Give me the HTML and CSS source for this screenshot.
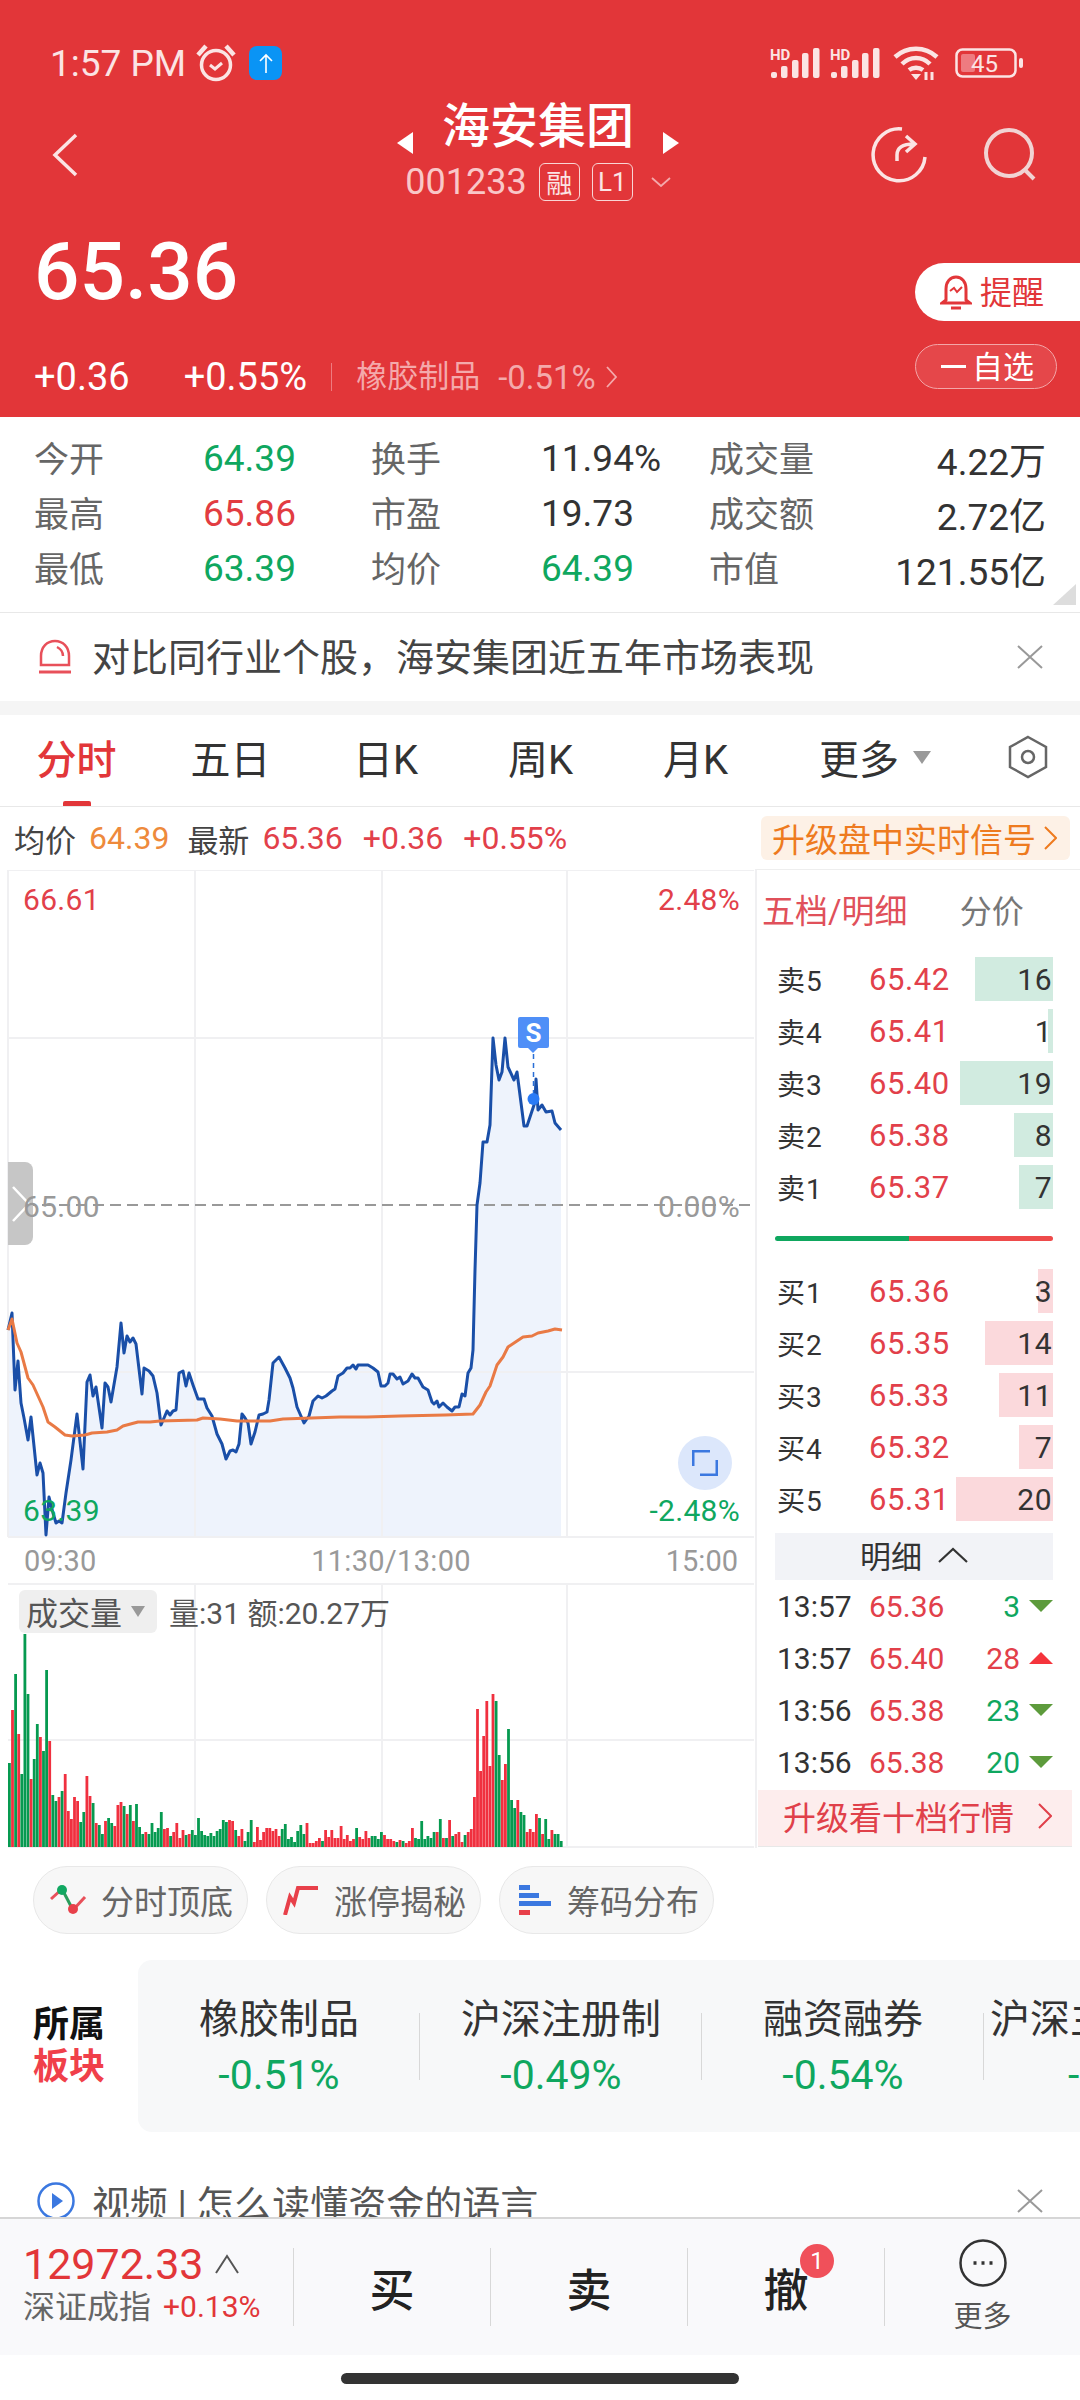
FILE: index.html
```html
<!DOCTYPE html>
<html>
<head>
  <meta charset="utf-8">
  <title>海安集团</title>
  <link rel="stylesheet" href="styles.css">
</head>
<body>
  <svg class="defs" width="0" height="0">
    <symbol id="signal" viewBox="0 0 50 30">
      <text x="0" y="12" class="hd-text">HD</text>
      <rect x="1" y="24" width="6" height="6" rx="2"/>
      <rect x="11" y="18" width="6.5" height="12" rx="2"/>
      <rect x="22" y="12" width="6.5" height="18" rx="2"/>
      <rect x="32" y="5" width="6.5" height="25" rx="2"/>
      <rect x="43" y="0" width="6.5" height="30" rx="2"/>
    </symbol>
    <symbol id="close" viewBox="0 0 26 24">
      <path d="M1 1 25 23M25 1 1 23" fill="none" stroke="#999" stroke-width="2"/>
    </symbol>
    <symbol id="tri-down" viewBox="0 0 24 12">
      <path d="M0 0H24L12 12Z" fill="#5d9b3c"/>
    </symbol>
    <symbol id="tri-up" viewBox="0 0 24 12">
      <path d="M0 12H24L12 0Z" fill="#f5343c"/>
    </symbol>
  </svg>

  <header class="header">
    <div class="status">
      <span class="status-time">1:57 PM</span>
      <svg class="alarm" width="40" height="38" viewBox="0 0 40 38" fill="none" stroke="#fbe4e4" stroke-width="3.5">
        <circle cx="20" cy="21" r="14.5"/>
        <path d="M14 21l5 4 7-6" stroke-width="3"/>
        <path d="M2 11 10 2M38 11 30 2" stroke-width="4.5"/>
      </svg>
      <span class="upload">
        <svg width="16" height="20" viewBox="0 0 16 20" fill="none" stroke="#fff" stroke-width="1.6"><path d="M8 20V2M2 8l6-6 6 6"/></svg>
      </span>
      <span class="status-right">
        <svg class="signal" width="50" height="30"><use href="#signal"/></svg>
        <svg class="signal signal-2" width="50" height="30"><use href="#signal"/></svg>
        <svg class="wifi" width="46" height="34" viewBox="0 0 46 34" fill="none" stroke="#fbe4e4" stroke-width="4.5">
          <path d="M2 11C14 0 32 0 44 11M9 18C17 10 29 10 37 18M16 24C20 21 26 21 30 24"/>
          <path d="M18 28h10l-5 6Z" fill="#fbe4e4" stroke="none"/>
          <path d="M33 26v8M39 26v8" stroke-width="3"/>
        </svg>
        <svg class="battery" width="68" height="30" viewBox="0 0 68 30">
          <rect x="1.5" y="1.5" width="59" height="27" rx="6" fill="none" stroke="#fbe4e4" stroke-width="2.5"/>
          <rect x="6" y="6" width="14" height="18" rx="2" fill="#ee7b80"/>
          <rect x="64" y="10" width="4" height="10" rx="2" fill="#fbe4e4"/>
          <text x="16" y="23.5" class="battery-text">45</text>
        </svg>
      </span>
    </div>

    <div class="nav">
      <svg class="nav-back" width="26" height="44" viewBox="0 0 26 44" fill="none" stroke="#fbe4e4" stroke-width="3.5"><path d="M24 2 3 22 24 42"/></svg>
      <div class="nav-center">
        <div class="nav-title">
          <span class="arrow-left"></span>
          <span>海安集团</span>
          <span class="arrow-right"></span>
        </div>
        <div class="nav-code">
          <span>001233</span>
          <span class="code-badge">融</span>
          <span class="code-badge">L1</span>
          <svg width="20" height="10" viewBox="0 0 20 10" fill="none" stroke="#f4a9ab" stroke-width="1.8"><path d="M1 1l9 8 9-8"/></svg>
        </div>
      </div>
      <div class="nav-icons">
        <svg width="56" height="56" viewBox="0 0 56 56" fill="none" stroke="#fbe4e4" stroke-width="3.5">
          <path d="M31 2A26 26 0 1 0 54 30"/>
          <path d="M26 34V28C26 21 31 17 43 17M35 9l9 8-9 8"/>
        </svg>
        <svg width="56" height="56" viewBox="0 0 56 56" fill="none" stroke="#f1d3d3" stroke-width="4">
          <circle cx="26" cy="26" r="23"/>
          <path d="M42 43l9 9"/>
        </svg>
      </div>
    </div>

    <div class="quote">
      <div class="quote-left">
        <div class="quote-price">65.36</div>
        <div class="quote-sub">
          <span class="quote-change">+0.36</span>
          <span class="quote-percent">+0.55%</span>
          <span class="quote-sep"></span>
          <span class="quote-block">橡胶制品</span>
          <span class="quote-block-pct">-0.51%</span>
          <svg width="11" height="22" viewBox="0 0 11 22" fill="none" stroke="#f4a9ab" stroke-width="1.8"><path d="M1 1l9 10-9 10"/></svg>
        </div>
      </div>
      <div class="quote-right">
        <div class="remind">
          <svg width="32" height="36" viewBox="0 0 32 36" fill="none" stroke="#e23639" stroke-width="3">
            <path d="M6 26V15C6 8 10 3 16 3S26 8 26 15V26L30 29H2Z"/>
            <path d="M11 34H21"/>
            <path d="M10 17l4-3 3 4 5-5" stroke-width="2"/>
          </svg>
          <span class="remind-text">提醒</span>
        </div>
        <div class="watch"><span class="watch-minus"></span><span class="watch-text">自选</span></div>
      </div>
    </div>
  </header>

  <main class="content">
    <section class="stats">
      <span class="label">今开</span><span class="green">64.39</span>
      <span class="label">换手</span><span class="dark">11.94%</span>
      <span class="label">成交量</span><span class="dark stat-end">4.22万</span>
      <span class="label">最高</span><span class="red">65.86</span>
      <span class="label">市盈</span><span class="dark">19.73</span>
      <span class="label">成交额</span><span class="dark stat-end">2.72亿</span>
      <span class="label">最低</span><span class="green">63.39</span>
      <span class="label">均价</span><span class="green">64.39</span>
      <span class="label">市值</span><span class="dark stat-end">121.55亿</span>
      <span class="stats-corner"></span>
    </section>

    <section class="banner">
      <svg width="36" height="36" viewBox="0 0 36 36" fill="none" stroke="#e8505a" stroke-width="2.5">
        <path d="M4 26V17C4 8 10 2 18 2S32 8 32 17V26Z"/>
        <path d="M20 8C24 10 26 13 26 17"/>
        <path d="M2 33H34" stroke-width="3"/>
      </svg>
      <span class="banner-text">对比同行业个股，海安集团近五年市场表现</span>
      <svg class="close" width="26" height="24"><use href="#close"/></svg>
    </section>
    <div class="strip"></div>

    <nav class="tabs">
      <span class="tab tab-active">分时</span>
      <span class="tab">五日</span>
      <span class="tab">日K</span>
      <span class="tab">周K</span>
      <span class="tab">月K</span>
      <span class="tab tab-more">更多<span class="tri"></span></span>
      <svg class="tab-gear" width="42" height="44" viewBox="0 0 42 44" fill="none" stroke="#666" stroke-width="2.5">
        <path d="M21 2 39 12V32L21 42 3 32V12Z"/>
        <circle cx="21" cy="22" r="6"/>
      </svg>
    </nav>

    <div class="info">
      <span class="info-label">均价</span>
      <span class="orange">64.39</span>
      <span class="info-label info-gap">最新</span>
      <span class="red">65.36</span>
      <span class="red info-gap">+0.36</span>
      <span class="red info-gap">+0.55%</span>
      <span class="info-promo">升级盘中实时信号
        <svg width="13" height="24" viewBox="0 0 13 24" fill="none" stroke="#ee7b1f" stroke-width="2"><path d="M1 1l11 11L1 23"/></svg>
      </span>
    </div>

    <div class="main">
      <div class="charts">
        <div class="plot">
          <svg class="plot-svg" width="755" height="668" viewBox="0 870 755 668">
            <polygon id="price-area" fill="#eef3fc"/>
            <path class="grid" d="M8 870H754M8 1038H754M8 1372H754M8 1537H754M8 870V1537M195 870V1537M382 870V1537M567 870V1537"/>
            <path d="M8 1205H754" fill="none" stroke="#999" stroke-width="2" stroke-dasharray="11 6"/>
            <polyline id="price-line" fill="none" stroke="#1a4fa8" stroke-width="3" stroke-linejoin="round"/>
            <polyline id="avg-line" fill="none" stroke="#e97a45" stroke-width="3" stroke-linejoin="round"/>
            <path d="M533.5 1054V1096" stroke="#2a6fd6" stroke-width="1.5" stroke-dasharray="5 4"/>
            <circle cx="533.5" cy="1099" r="6" fill="#2a7bf6"/>
          </svg>
          <span class="side-tab">
            <svg width="20" height="38" viewBox="0 0 20 38" fill="none" stroke="#fff" stroke-width="2.5"><path d="M2 2 18 19 2 36"/></svg>
          </span>
          <span class="chart-num num-tl red">66.61</span>
          <span class="chart-num num-tr red">2.48%</span>
          <span class="chart-num num-ml gray">65.00</span>
          <span class="chart-num num-mr gray">0.00%</span>
          <span class="chart-num num-bl green">63.39</span>
          <span class="chart-num num-br green">-2.48%</span>
          <span class="signal-s">S</span>
          <span class="expand">
            <svg width="26" height="26" viewBox="0 0 26 26" fill="none" stroke="#3b78e0" stroke-width="3"><path d="M1 16V1H18M25 10V25H8"/></svg>
          </span>
        </div>

        <div class="axis">
          <span>09:30</span>
          <span class="axis-mid">11:30/13:00</span>
          <span>15:00</span>
        </div>

        <div class="vol">
          <svg class="plot-svg" width="755" height="265" viewBox="0 1583 755 265">
            <path class="grid" d="M8 1584H754M8 1740H754M8 1847H754M195 1584V1847M382 1584V1847M567 1584V1847"/>
            <g id="vol-bars"></g>
          </svg>
          <div class="vol-head">
            <span class="vol-chip">成交量<span class="tri"></span></span>
            <span class="vol-text">量:31 额:20.27万</span>
          </div>
        </div>
      </div>

      <aside class="depth">
        <div class="depth-head">
          <span class="depth-tab">五档/明细</span>
          <span class="depth-tab-off">分价</span>
        </div>
        <div class="depth-rows">
          <div class="depth-row"><span class="bar bar-sell" style="width:78px"></span><span class="depth-label">卖5</span><span class="depth-price">65.42</span><span class="depth-qty">16</span></div>
          <div class="depth-row"><span class="bar bar-sell" style="width:5px"></span><span class="depth-label">卖4</span><span class="depth-price">65.41</span><span class="depth-qty">1</span></div>
          <div class="depth-row"><span class="bar bar-sell" style="width:93px"></span><span class="depth-label">卖3</span><span class="depth-price">65.40</span><span class="depth-qty">19</span></div>
          <div class="depth-row"><span class="bar bar-sell" style="width:39px"></span><span class="depth-label">卖2</span><span class="depth-price">65.38</span><span class="depth-qty">8</span></div>
          <div class="depth-row"><span class="bar bar-sell" style="width:34px"></span><span class="depth-label">卖1</span><span class="depth-price">65.37</span><span class="depth-qty">7</span></div>
        </div>
        <div class="depth-split"><span class="split-green"></span><span class="split-red"></span></div>
        <div class="depth-rows">
          <div class="depth-row"><span class="bar bar-buy" style="width:15px"></span><span class="depth-label">买1</span><span class="depth-price">65.36</span><span class="depth-qty">3</span></div>
          <div class="depth-row"><span class="bar bar-buy" style="width:68px"></span><span class="depth-label">买2</span><span class="depth-price">65.35</span><span class="depth-qty">14</span></div>
          <div class="depth-row"><span class="bar bar-buy" style="width:54px"></span><span class="depth-label">买3</span><span class="depth-price">65.33</span><span class="depth-qty">11</span></div>
          <div class="depth-row"><span class="bar bar-buy" style="width:34px"></span><span class="depth-label">买4</span><span class="depth-price">65.32</span><span class="depth-qty">7</span></div>
          <div class="depth-row"><span class="bar bar-buy" style="width:97px"></span><span class="depth-label">买5</span><span class="depth-price">65.31</span><span class="depth-qty">20</span></div>
        </div>
        <div class="detail-head">明细
          <svg width="30" height="16" viewBox="0 0 30 16" fill="none" stroke="#333" stroke-width="2.2"><path d="M1 15 15 2 29 15"/></svg>
        </div>
        <div class="trade"><span class="trade-time">13:57</span><span class="trade-price">65.36</span><span class="trade-qty green">3</span><svg width="24" height="12"><use href="#tri-down"/></svg></div>
        <div class="trade"><span class="trade-time">13:57</span><span class="trade-price">65.40</span><span class="trade-qty red">28</span><svg width="24" height="12"><use href="#tri-up"/></svg></div>
        <div class="trade"><span class="trade-time">13:56</span><span class="trade-price">65.38</span><span class="trade-qty green">23</span><svg width="24" height="12"><use href="#tri-down"/></svg></div>
        <div class="trade"><span class="trade-time">13:56</span><span class="trade-price">65.38</span><span class="trade-qty green">20</span><svg width="24" height="12"><use href="#tri-down"/></svg></div>
        <div class="depth-promo">升级看十档行情
          <svg width="14" height="26" viewBox="0 0 14 26" fill="none" stroke="#e0404a" stroke-width="2"><path d="M1 1l12 12L1 25"/></svg>
        </div>
      </aside>
    </div>

    <div class="chips">
      <span class="chip">
        <svg width="38" height="30" viewBox="0 0 38 30" fill="none" stroke-width="3">
          <path d="M2 14 13 4" stroke="#e8505a"/><path d="M13 4 24 25" stroke="#2a9d5c"/><path d="M24 25 36 12" stroke="#e8505a"/>
          <circle cx="13" cy="5" r="5" fill="#11a862"/><circle cx="24" cy="24" r="5" fill="#e8404a"/>
        </svg>
        分时顶底
      </span>
      <span class="chip">
        <svg width="38" height="30" viewBox="0 0 38 30" fill="none" stroke="#e8404a" stroke-width="4"><path d="M3 30 8 12 12 18 16 3H36"/></svg>
        涨停揭秘
      </span>
      <span class="chip">
        <svg width="38" height="30" viewBox="0 0 38 30">
          <rect x="4" y="0" width="11" height="5" fill="#3b78e0"/>
          <rect x="4" y="8" width="20" height="5" fill="#3b78e0"/>
          <rect x="4" y="16" width="32" height="5" fill="#3b78e0"/>
          <rect x="4" y="25" width="11" height="5" fill="#e8404a"/>
        </svg>
        筹码分布
      </span>
    </div>

    <section class="sector">
      <div class="sector-title"><span>所属</span><span class="sector-title-red">板块</span></div>
      <div class="sector-card">
        <div class="sector-item"><span class="sector-name">橡胶制品</span><span class="sector-pct">-0.51%</span></div>
        <div class="sector-item"><span class="sector-name">沪深注册制</span><span class="sector-pct">-0.49%</span></div>
        <div class="sector-item"><span class="sector-name">融资融券</span><span class="sector-pct">-0.54%</span></div>
        <div class="sector-item sector-item-cut"><span class="sector-name">沪深主板</span><span class="sector-pct">-0.50%</span></div>
      </div>
    </section>

    <section class="video">
      <svg width="38" height="38" viewBox="0 0 38 38" fill="none" stroke="#3b78e0" stroke-width="2.5">
        <circle cx="19" cy="19" r="17.5"/>
        <path d="M15 11 26 19 15 27Z" fill="#3b78e0" stroke="none"/>
      </svg>
      <span class="video-text">视频 | 怎么读懂资金的语言</span>
      <svg class="close" width="26" height="24"><use href="#close"/></svg>
    </section>
  </main>

  <footer class="bottom">
    <div class="bottom-index">
      <div class="index-top"><span class="index-value">12972.33</span>
        <svg width="24" height="20" viewBox="0 0 24 20" fill="none" stroke="#555" stroke-width="2"><path d="M1 19 12 2 23 19"/></svg>
      </div>
      <div class="index-sub"><span>深证成指</span><span class="index-pct">+0.13%</span></div>
    </div>
    <div class="bottom-btn">买</div>
    <div class="bottom-btn">卖</div>
    <div class="bottom-btn">撤<span class="badge">1</span></div>
    <div class="bottom-more">
      <svg width="48" height="48" viewBox="0 0 48 48" fill="none" stroke="#333" stroke-width="2.5">
        <circle cx="24" cy="24" r="22.5"/>
        <path d="M14.5 24h3M22.5 24h3M30.5 24h3" stroke-width="3.5"/>
      </svg>
      <span>更多</span>
    </div>
  </footer>
  <div class="home"><span class="home-bar"></span></div>

  <script src="chart.js"></script>
</body>
</html>
```

FILE: styles.css
```css
* {
  box-sizing: border-box;
}

html, body {
  margin: 0;
  height: 2400px;
}

body {
  display: flex;
  flex-direction: column;
  width: 1080px;
  overflow: hidden;
  background-color: #fff;
  font-family: Roboto, "Noto Sans CJK SC", sans-serif;
  color: #333;
}

.defs {
  position: absolute;
}

.hd-text {
  font-size: 15px;
  font-weight: 700;
  font-family: Roboto, sans-serif;
}

.green { color: #0fa75f; }
.red { color: #e2404a; }
.gray { color: #999; }
.dark { color: #333; }
.orange { color: #ee8a3c; }

/* header */
.header {
  flex: none;
  height: 417px;
  background-color: #e23639;
  color: #fff;
}

.status {
  display: flex;
  align-items: center;
  height: 42px;
  margin-top: 42px;
  padding: 0 57px 0 50px;
}

.status-time {
  font-size: 37px;
  color: #fbe4e4;
}

.alarm {
  margin-left: 10px;
}

.upload {
  display: flex;
  align-items: center;
  justify-content: center;
  width: 33px;
  height: 34px;
  margin-left: 13px;
  border-radius: 8px;
  background-color: #0a94f5;
}

.status-right {
  display: flex;
  align-items: center;
  margin-left: auto;
  color: #fbe4e4;
  fill: #fbe4e4;
}

.signal-2 {
  margin-left: 10px;
}

.wifi {
  margin-left: 13px;
}

.battery {
  margin-left: 16px;
}

.battery-text {
  font-size: 24px;
  font-family: Roboto, sans-serif;
  fill: #fbe4e4;
}

.nav {
  display: flex;
  align-items: center;
  position: relative;
  height: 118px;
  margin-top: 12px;
}

.nav-back {
  margin-left: 52px;
}

.nav-center {
  display: flex;
  flex-direction: column;
  align-items: center;
  width: 400px;
  margin: -8px 0 0 260px;
}

.nav-title {
  display: flex;
  align-items: center;
  gap: 29px;
  height: 56px;
  font-size: 48px;
  font-weight: 500;
  line-height: 56px;
}

.arrow-left {
  margin-top: 32px;
  border-top: 11px solid transparent;
  border-bottom: 11px solid transparent;
  border-right: 16px solid #fff;
}

.arrow-right {
  margin-top: 32px;
  border-top: 11px solid transparent;
  border-bottom: 11px solid transparent;
  border-left: 16px solid #fff;
}

.nav-code {
  display: flex;
  align-items: center;
  gap: 12px;
  height: 44px;
  margin-top: 5px;
  font-size: 36px;
  color: #f9c7c8;
}

.code-badge {
  display: flex;
  align-items: center;
  justify-content: center;
  width: 41px;
  height: 38px;
  border: 1px solid #f9d5d5;
  border-radius: 6px;
  font-size: 26px;
  color: #fbe4e4;
}

.code-badge + svg {
  margin-left: 6px;
}

.nav-icons {
  display: flex;
  align-items: center;
  gap: 56px;
  margin-left: auto;
  margin-right: 41px;
}

.quote {
  display: flex;
  justify-content: space-between;
}

.quote-left {
  padding: 18px 0 0 34px;
}

.quote-price {
  font-size: 80px;
  font-weight: 500;
  line-height: 80px;
}

.quote-sub {
  display: flex;
  align-items: center;
  height: 40px;
  margin-top: 45px;
  font-size: 38px;
}

.quote-percent {
  margin-left: 54px;
}

.quote-sep {
  width: 1px;
  height: 28px;
  margin: 0 24px;
  background-color: #ee7b80;
}

.quote-block {
  margin-bottom: 8px;
  font-size: 31px;
  color: #f4a9ab;
}

.quote-block-pct {
  margin: 0 10px 0 18px;
  font-size: 33px;
  color: #f4a9ab;
}

.quote-right {
  display: flex;
  flex-direction: column;
  align-items: flex-end;
  padding-top: 49px;
}

.remind {
  display: flex;
  align-items: center;
  gap: 8px;
  width: 165px;
  height: 58px;
  padding-left: 25px;
  border-radius: 29px 0 0 29px;
  background-color: #fff;
  font-size: 32px;
  color: #e23639;
}

.remind-text {
  margin-bottom: 5px;
}

.watch {
  display: flex;
  align-items: center;
  width: 142px;
  height: 45px;
  margin: 23px 23px 0 0;
  padding-left: 25px;
  border: 1px solid #f3a6a8;
  border-radius: 23px;
  background-color: #e5474a;
  font-size: 31px;
}

.watch-minus {
  width: 25px;
  height: 3px;
  margin-right: 6px;
  background-color: #fff;
}

.watch-text {
  margin-bottom: 5px;
}

/* page content below the header */
.content {
  flex: 1;
  min-height: 0;
  overflow: hidden;
}

.stats {
  display: grid;
  grid-template-columns: 169px 168px 170px 168px 140px 1fr;
  grid-auto-rows: 55px;
  align-items: center;
  position: relative;
  height: 196px;
  padding: 14px 34px 0 34px;
  border-bottom: 1px solid #e8e8e8;
  font-size: 37px;
}

.label {
  margin-bottom: 5px;
  font-size: 35px;
  color: #666;
}

.stats .red {
  color: #e23c41;
}

.stat-end {
  text-align: right;
}

.stats-corner {
  position: absolute;
  right: 4px;
  bottom: 7px;
  border-left: 23px solid transparent;
  border-bottom: 21px solid #ddd;
}

.banner {
  display: flex;
  align-items: center;
  height: 88px;
  padding: 0 37px;
  font-size: 38px;
  color: #444;
}

.banner-text {
  margin: 0 0 6px 19px;
}

.close {
  margin-left: auto;
}

.strip {
  height: 14px;
  background-color: #f5f5f5;
}

.tabs {
  display: flex;
  align-items: center;
  position: relative;
  height: 92px;
  padding-bottom: 7px;
  border-bottom: 1px solid #e8e8e8;
}

.tab {
  display: flex;
  align-items: center;
  justify-content: center;
  width: 155px;
  font-size: 40px;
  color: #333;
}

.tab-active {
  width: 153px;
  font-weight: 500;
  color: #e23639;
}

.tab-active::after {
  content: '';
  position: absolute;
  left: 63px;
  bottom: 0;
  width: 28px;
  height: 5px;
  border-radius: 2px 2px 0 0;
  background-color: #e23639;
}

.tab-more {
  width: 200px;
  margin-left: 2px;
}

.tri {
  display: inline-block;
  margin-left: 14px;
  border-left: 9px solid transparent;
  border-right: 9px solid transparent;
  border-top: 13px solid #999;
}

.tab-gear {
  margin-left: 32px;
}

.info {
  display: flex;
  align-items: center;
  height: 62px;
  padding: 0 10px 0 14px;
  font-size: 32px;
}

.info-label {
  font-size: 31px;
  color: #444;
}

.info .orange {
  margin-left: 13px;
}

.info .red {
  margin-left: 13px;
}

.info .info-gap,
.info-gap {
  margin-left: 20px;
}

.info .info-label.info-gap {
  margin-left: 18px;
}

.info-promo {
  display: flex;
  align-items: center;
  gap: 8px;
  height: 44px;
  margin-left: auto;
  padding: 0 13px 0 11px;
  border-radius: 6px;
  background-color: #fdf1e6;
  font-size: 33px;
  color: #ee7b1f;
}

/* chart column and depth column */
.main {
  display: flex;
  height: 979px;
}

.charts {
  flex: none;
  width: 755px;
}

.plot {
  position: relative;
  height: 668px;
  margin-top: 1px;
}

.plot-svg {
  display: block;
}

.grid {
  fill: none;
  stroke: #f0f0f2;
  stroke-width: 2;
}

.chart-num {
  position: absolute;
  font-size: 30px;
  line-height: 36px;
  letter-spacing: 0.3px;
}

.num-tl { left: 23px; top: 12px; }
.num-tr { right: 15px; top: 12px; }
.num-ml { left: 23px; top: 319px; }
.num-mr { right: 15px; top: 319px; }
.num-bl { left: 23px; top: 623px; }
.num-br { right: 15px; top: 623px; }

.side-tab {
  display: flex;
  align-items: center;
  justify-content: center;
  position: absolute;
  left: 8px;
  top: 292px;
  width: 25px;
  height: 83px;
  border-radius: 0 8px 8px 0;
  background-color: #c6c6c6;
}

.signal-s {
  display: flex;
  align-items: center;
  justify-content: center;
  position: absolute;
  left: 518px;
  top: 147px;
  width: 31px;
  height: 31px;
  border-radius: 2px;
  background-color: #4f8ff7;
  font-size: 26px;
  font-weight: 700;
  color: #fff;
}

.signal-s::after {
  content: '';
  position: absolute;
  left: 10px;
  bottom: -5px;
  border-left: 5px solid transparent;
  border-right: 5px solid transparent;
  border-top: 5px solid #4f8ff7;
}

.expand {
  display: flex;
  align-items: center;
  justify-content: center;
  position: absolute;
  left: 678px;
  top: 566px;
  width: 54px;
  height: 54px;
  border-radius: 50%;
  background-color: #dce7fb;
}

.axis {
  display: flex;
  justify-content: space-between;
  align-items: center;
  height: 45px;
  padding: 0 17px 0 24px;
  font-size: 29px;
  color: #999;
}

.axis-mid {
  margin-left: 20px;
  letter-spacing: 0.3px;
}

.vol {
  position: relative;
  height: 265px;
}

.vol-head {
  display: flex;
  align-items: center;
  position: absolute;
  left: 19px;
  top: 6px;
}

.vol-chip {
  display: flex;
  align-items: center;
  width: 138px;
  height: 43px;
  padding-left: 7px;
  border-radius: 6px;
  background-color: #efefef;
  font-size: 32px;
  color: #555;
}

.vol-chip .tri {
  margin-left: 9px;
  border-left-width: 7px;
  border-right-width: 7px;
  border-top-width: 11px;
}

.vol-text {
  margin-left: 12px;
  font-size: 30px;
  color: #555;
}

.depth {
  flex: 1;
  padding: 0 27px 0 18px;
  border-left: 2px solid #f0f0f2;
  border-top: 1px solid #eee;
}

.depth-head {
  display: flex;
  align-items: center;
  height: 87px;
  padding-bottom: 9px;
  margin-left: -13px;
}

.depth-tab {
  font-size: 33px;
  color: #e0505a;
}

.depth-tab-off {
  margin-left: 52px;
  font-size: 32px;
  color: #777;
}

.depth-rows {
  display: flex;
  flex-direction: column;
  gap: 8px;
}

.depth-row {
  display: flex;
  align-items: center;
  position: relative;
  height: 44px;
  padding: 0 1px 0 2px;
}

.bar {
  position: absolute;
  right: 0;
  top: 0;
  bottom: 0;
}

.bar-sell {
  background-color: #d1ebe0;
}

.bar-buy {
  background-color: #fbd9dc;
}

.depth-label {
  position: relative;
  width: 92px;
  font-size: 28px;
  letter-spacing: 1px;
}

.depth-price {
  position: relative;
  font-size: 31px;
  letter-spacing: 0.6px;
  color: #e2404a;
}

.depth-qty {
  position: relative;
  margin-left: auto;
  font-size: 30px;
  letter-spacing: 0.5px;
}

.depth-split {
  display: flex;
  height: 5px;
  margin: 27px 0 28px;
  border-radius: 3px;
  overflow: hidden;
}

.split-green {
  width: 134px;
  background-color: #0fa75f;
}

.split-red {
  flex: 1;
  background-color: #ee4b4b;
}

.detail-head {
  display: flex;
  align-items: center;
  justify-content: center;
  gap: 16px;
  height: 47px;
  margin-top: 12px;
  padding-bottom: 4px;
  background-color: #f2f3f7;
  font-size: 31px;
}

.trade {
  display: flex;
  align-items: center;
  height: 52px;
  padding-left: 2px;
  font-size: 30px;
}

.trade-time {
  width: 92px;
}

.trade-price {
  color: #e2404a;
}

.trade-qty {
  margin-left: auto;
  margin-right: 9px;
}

.depth-promo {
  display: flex;
  align-items: center;
  justify-content: space-between;
  height: 57px;
  margin: 2px -19px 0 -17px;
  padding: 0 20px 4px 25px;
  background-color: #fdeded;
  border-bottom: 1px solid #e8e8e8;
  font-size: 33px;
  color: #e0404a;
}

/* chips and sectors */
.chips {
  display: flex;
  gap: 18px;
  padding: 18px 0 0 33px;
}

.chip {
  display: flex;
  align-items: center;
  gap: 14px;
  width: 215px;
  height: 68px;
  padding-left: 15px;
  border: 1px solid #e8e8e8;
  border-radius: 34px;
  background-color: #f7f7f7;
  font-size: 33px;
  color: #666;
}

.sector {
  display: flex;
  align-items: center;
  margin-top: 26px;
}

.sector-title {
  display: flex;
  flex-direction: column;
  width: 138px;
  padding-left: 33px;
  font-size: 36px;
  font-weight: 700;
  line-height: 42px;
  color: #111;
}

.sector-title-red {
  color: #f0404a;
}

.sector-card {
  display: flex;
  flex: 1;
  height: 172px;
  overflow: hidden;
  border-radius: 14px 0 0 14px;
  background-color: #f7f8f9;
}

.sector-item {
  display: flex;
  flex: none;
  flex-direction: column;
  align-items: center;
  position: relative;
  width: 282px;
  padding-top: 32px;
}

.sector-item::after {
  content: '';
  position: absolute;
  right: 0;
  top: 53px;
  width: 1px;
  height: 67px;
  background-color: #d8d8d8;
}

.sector-item-cut {
  align-items: flex-start;
  padding-left: 6px;
}

.sector-item-cut .sector-pct {
  margin-left: 78px;
}

.sector-name {
  font-size: 40px;
  line-height: 56px;
  white-space: nowrap;
}

.sector-pct {
  margin-top: 2px;
  font-size: 41px;
  line-height: 50px;
  color: #0fa75f;
}

.video {
  display: flex;
  align-items: center;
  height: 44px;
  margin-top: 47px;
  padding: 0 37px;
  font-size: 38px;
  color: #555;
}

.video-text {
  margin-left: 17px;
}

/* bottom bar */
.bottom {
  display: flex;
  flex: none;
  align-items: center;
  height: 138px;
  border-top: 2px solid #d6d6d6;
  background-color: #f9f9fb;
}

.bottom-index {
  width: 294px;
  height: 78px;
  padding-left: 23px;
  border-right: 1px solid #d8d8d8;
}

.index-top {
  display: flex;
  align-items: center;
  gap: 11px;
  height: 40px;
  margin-top: -4px;
}

.index-value {
  font-size: 43px;
  color: #e23639;
}

.index-sub {
  display: flex;
  align-items: center;
  gap: 12px;
  margin-top: 2px;
  font-size: 32px;
  line-height: 42px;
  color: #666;
}

.index-pct {
  font-size: 30px;
  color: #e23639;
}

.bottom-btn {
  display: flex;
  align-items: center;
  justify-content: center;
  position: relative;
  width: 197px;
  height: 78px;
  border-right: 1px solid #d8d8d8;
  font-size: 45px;
  font-weight: 500;
  color: #222;
}

.badge {
  display: flex;
  align-items: center;
  justify-content: center;
  position: absolute;
  left: 112px;
  top: -4px;
  width: 34px;
  height: 34px;
  border-radius: 50%;
  background-color: #f0505a;
  font-size: 24px;
  font-weight: 400;
  color: #fff;
}

.bottom-more {
  display: flex;
  flex: 1;
  flex-direction: column;
  align-items: center;
  gap: 6px;
  font-size: 29px;
  color: #555;
}

.home {
  display: flex;
  flex: none;
  justify-content: center;
  height: 45px;
  padding-top: 18px;
  background-color: #fff;
}

.home-bar {
  width: 398px;
  height: 11px;
  border-radius: 6px;
  background-color: #333;
}
```

FILE: chart.js
```js
// Price and average lines, in page coordinates read off the chart
const price = [
  8,1330, 12,1313, 15,1390, 18,1361, 21,1403, 24,1418, 28,1440, 31,1417, 37,1475, 40,1463,
  43,1473, 46,1535, 49,1497, 53,1513, 56,1523, 59,1521, 62,1523, 66,1493, 71,1460, 77,1414,
  83,1469, 87,1382, 90,1375, 93,1396, 96,1387, 102,1428, 105,1383, 108,1387, 111,1402, 117,1367,
  121,1323, 124,1353, 127,1336, 130,1342, 133,1338, 136,1344, 142,1394, 144,1368, 149,1371, 153,1376,
  157,1393, 161,1425, 167,1411, 170,1415, 173,1411, 176,1410, 179,1373, 183,1371, 186,1386, 189,1373,
  193,1385, 198,1399, 204,1399, 207,1408, 212,1416, 217,1434, 222,1444, 226,1459, 230,1451, 233,1450,
  236,1452, 239,1444, 242,1414, 245,1418, 248,1423, 251,1444, 255,1432, 259,1415, 263,1414, 267,1412,
  269,1400, 273,1363, 279,1357, 285,1368, 290,1378, 293,1388, 297,1407, 304,1423, 309,1416, 313,1401,
  318,1396, 322,1398, 326,1396, 332,1391, 335,1389, 338,1376, 343,1373, 347,1368, 350,1368, 353,1365,
  356,1369, 358,1365, 368,1365, 373,1368, 378,1372, 381,1386, 385,1386, 388,1383, 390,1374, 393,1374,
  397,1379, 400,1377, 403,1384, 408,1381, 412,1374, 415,1378, 418,1378, 423,1387, 428,1390, 432,1402,
  434,1404, 437,1401, 439,1407, 443,1403, 447,1407, 452,1411, 455,1407, 459,1407, 462,1394, 465,1396,
  468,1373, 471,1368, 473,1350, 475,1270, 477,1205, 480,1183, 483,1142, 487,1142, 490,1125, 493,1038,
  496,1065, 499,1080, 502,1072, 505,1038, 508,1067, 514,1080, 517,1072, 524,1126, 527,1126, 535,1102,
  536,1079, 538,1110, 542,1105, 546,1112, 552,1111, 555,1123, 561,1130
];

const avg = [
  8,1330, 12,1319, 17,1343, 21,1352, 28,1378, 33,1385, 43,1407, 48,1422, 55,1427, 65,1435,
  72,1436, 85,1435, 92,1433, 107,1432, 117,1430, 123,1426, 138,1422, 150,1422, 160,1421, 197,1420,
  203,1418, 220,1419, 237,1421, 253,1421, 270,1421, 283,1419, 340,1417, 367,1417, 400,1416, 445,1415,
  473,1414, 480,1405, 486,1392, 490,1386, 497,1365, 503,1357, 508,1347, 517,1341, 523,1337, 532,1336,
  538,1333, 548,1331, 555,1329, 562,1330
];

// One entry per minute: g = falling (green), r = rising (red), then bar height in px
const volume = (
  'g84 r137 g173 r113 g73 g213 g153 r68 g88 g123 r110 g96 g177 r106 g52 g46 r50 g56 r73 r36 ' +
  'r28 r50 r46 g25 g35 r71 r51 g44 r24 g22 g13 r26 g29 g24 r21 r42 r45 g41 r33 g42 ' +
  'r26 g43 g20 g13 r15 g13 g24 g15 g19 g35 r18 r19 g11 r15 r24 r9 r17 g12 r13 g17 ' +
  'g12 g29 g16 g12 g11 g14 g11 g16 g18 g27 g25 r27 r26 g17 r11 r18 g6 g15 g27 r5 ' +
  'r20 r7 r15 r19 r19 r16 r18 r11 g18 g23 g8 g10 g5 g16 g22 g13 r24 r4 r4 r6 ' +
  'r9 g6 r17 r10 r17 r9 r9 r21 r8 r12 r6 r8 g19 r10 r8 r16 r9 g11 g11 g8 ' +
  'g15 r12 r8 r8 r6 g5 r7 g6 r4 r6 r19 g9 g8 g26 g8 g11 g9 g15 r15 g28 ' +
  'r9 g9 r27 g11 r13 r15 r5 g12 r15 r18 r50 r138 r76 r111 r146 r81 r153 g146 g92 r67 ' +
  'r83 g118 g47 g39 r47 g35 g32 r15 r18 r15 r33 g29 r13 g28 g8 r17 g13 g13 g6'
).split(' ');

function toPoints(list) {
  const points = [];
  for (let i = 0; i < list.length; i += 2) {
    points.push(list[i] + ',' + list[i + 1]);
  }
  return points.join(' ');
}

document.getElementById('price-line').setAttribute('points', toPoints(price));
document.getElementById('avg-line').setAttribute('points', toPoints(avg));
document.getElementById('price-area').setAttribute('points', toPoints(price) + ' 561,1537 8,1537');

const bars = document.getElementById('vol-bars');
volume.forEach((entry, index) => {
  const height = Number(entry.slice(1));
  const rect = document.createElementNS('http://www.w3.org/2000/svg', 'rect');
  rect.setAttribute('x', 8 + index * 3.1);
  rect.setAttribute('y', 1847 - height);
  rect.setAttribute('width', 2.8);
  rect.setAttribute('height', height);
  rect.setAttribute('fill', entry[0] === 'g' ? '#069a50' : '#f0303f');
  bars.appendChild(rect);
});
```
